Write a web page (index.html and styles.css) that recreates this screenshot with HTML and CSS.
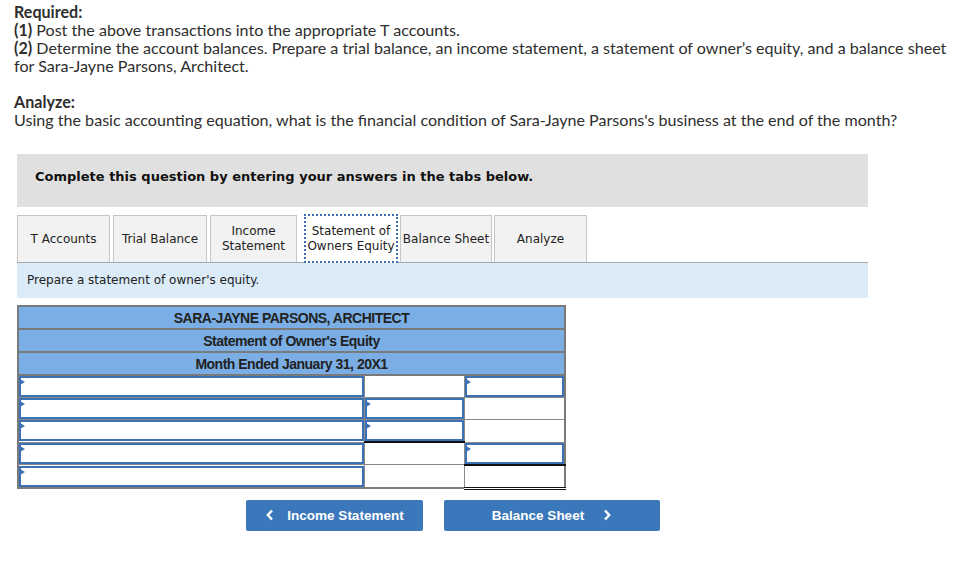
FILE: index.html
```html
<!DOCTYPE html>
<html>
<head>
<meta charset="utf-8">
<link rel="stylesheet" href="styles.css">
</head>
<body>
<div class="intro">
  <p><b>Required:</b><br>
  <b>(1)</b> Post the above transactions into the appropriate T accounts.<br>
  <b>(2)</b> Determine the account balances. Prepare a trial balance, an income statement, a statement of owner’s equity, and a balance sheet for Sara-Jayne Parsons, Architect.</p>
  <p><b>Analyze:</b><br>
  Using the basic accounting equation, what is the financial condition of Sara-Jayne Parsons's business at the end of the month?</p>
</div>

<div class="question">
  <div class="banner">Complete this question by entering your answers in the tabs below.</div>

  <div class="tabs">
    <div class="tab t1">T Accounts</div>
    <div class="tab t2">Trial Balance</div>
    <div class="tab t3">Income<br>Statement</div>
    <div class="tab t4 active">Statement of<br>Owners Equity</div>
    <div class="tab t5">Balance Sheet</div>
    <div class="tab t6">Analyze</div>
  </div>
  <div class="prompt">Prepare a statement of owner's equity.</div>

  <table class="stmt">
    <colgroup><col class="c1"><col class="c2"><col class="c3"></colgroup>
    <tr><th colspan="3">SARA-JAYNE PARSONS, ARCHITECT</th></tr>
    <tr><th colspan="3">Statement of Owner's Equity</th></tr>
    <tr><th colspan="3">Month Ended January 31, 20X1</th></tr>
    <tr><td><div class="inp"></div></td><td></td><td><div class="inp"></div></td></tr>
    <tr><td><div class="inp"></div></td><td><div class="inp"></div></td><td></td></tr>
    <tr><td><div class="inp"></div></td><td><div class="inp"></div></td><td></td></tr>
    <tr><td><div class="inp"></div></td><td class="single"></td><td><div class="inp"></div></td></tr>
    <tr><td><div class="inp"></div></td><td></td><td class="double"></td></tr>
  </table>

  <div class="nav">
    <button class="btn prev"><svg width="10" height="12" viewBox="0 0 10 12"><path d="M7 1.5 L2.8 6 L7 10.5" fill="none" stroke="#fff" stroke-width="2.4"/></svg><span>Income Statement</span></button>
    <button class="btn next"><span>Balance Sheet</span><svg width="10" height="12" viewBox="0 0 10 12"><path d="M3 1.5 L7.2 6 L3 10.5" fill="none" stroke="#fff" stroke-width="2.4"/></svg></button>
  </div>
</div>
</body>
</html>
```

FILE: styles.css
```css
html, body {
  margin: 0;
  padding: 0;
  background: #fff;
}
body {
  width: 977px;
  height: 561px;
  overflow: hidden;
}
.intro {
  padding: 3px 20px 0 14px;
  font-family: Lato, "Liberation Sans", sans-serif;
  font-size: 16.1px;
  line-height: 18px;
  color: #2e2e2e;
}
.intro p {
  margin: 0 0 18px 0;
}
.intro p:last-child {
  margin-bottom: 0;
}
.intro b {
  font-weight: 700;
}
.question {
  margin: 25px 0 0 17px;
  width: 851px;
}
.banner {
  background: #e0e0e0;
  height: 53px;
  box-sizing: border-box;
  padding: 15px 18px 0;
  font-family: "DejaVu Sans", Verdana, sans-serif;
  font-weight: bold;
  font-size: 13px;
  line-height: 16px;
  color: #111;
}
.tabs {
  display: flex;
  margin-top: 8px;
  height: 47px;
  border-bottom: 1px solid #a9a9a9;
  font-family: "DejaVu Sans", Verdana, sans-serif;
  font-size: 12px;
  line-height: 15px;
  color: #222;
}
.tab {
  box-sizing: border-box;
  background: #f2f2f2;
  border: 1px solid #c6c6c6;
  border-bottom: none;
  display: flex;
  align-items: center;
  justify-content: center;
  text-align: center;
  margin-right: 3px;
}
.t1 { width: 93px; }
.t2 { width: 94px; }
.t3 { width: 87px; margin-right: 7px; }
.t4 { width: 94px; margin-right: 2px; }
.t5 { width: 92px; margin-right: 2px; }
.t6 { width: 93px; }
.tab.active {
  background: #fff;
  border: 2px dotted #3b6eae;
  height: 49px;
  margin-top: -1px;
  position: relative;
  z-index: 1;
}
.prompt {
  background: #dcebf8;
  height: 35px;
  box-sizing: border-box;
  padding: 10px 10px 0;
  font-family: "DejaVu Sans", Verdana, sans-serif;
  font-size: 12px;
  line-height: 15px;
  color: #222;
}
.stmt {
  margin-top: 7px;
  border-collapse: collapse;
  table-layout: fixed;
  width: 547px;
  border: 2px solid #7a7a7a;
}
.c1 { width: 346px; }
.c2 { width: 100px; }
.c3 { width: 101px; }
.stmt th {
  background: #7aaee4;
  height: 21px;
  padding: 0;
  border: 2px solid #7a7a7a;
  font-family: "Liberation Sans", Arial, sans-serif;
  font-weight: bold;
  font-size: 14px;
  letter-spacing: -0.5px;
  color: #222;
  text-align: center;
  vertical-align: middle;
}
.stmt td {
  height: 21px;
  padding: 0;
  border: 1px solid #8a8a8a;
  background: #fff;
}
.stmt td.single {
  border-top: 2px solid #111;
}
.stmt td.double {
  border-top: 2px solid #111;
  border-bottom: 3px double #111;
}
.inp {
  position: relative;
  height: 21px;
  box-sizing: border-box;
  border: 2px solid #3d71b5;
}
.inp::before {
  content: "";
  position: absolute;
  left: -1px;
  top: 1px;
  border-left: 5px solid #3d71b5;
  border-top: 3px solid transparent;
  border-bottom: 3px solid transparent;
}
.nav {
  display: flex;
  gap: 21px;
  margin-top: 10px;
  padding-left: 229px;
}
.btn {
  height: 31px;
  background: #3a77bb;
  border: none;
  border-radius: 2px;
  color: #fff;
  font-family: "Liberation Sans", Arial, sans-serif;
  font-weight: bold;
  font-size: 13.5px;
  display: flex;
  align-items: center;
  justify-content: center;
  padding: 0;
}
.prev { width: 177px; gap: 12px; }
.next { width: 216px; gap: 18px; padding-left: 0; }
```
